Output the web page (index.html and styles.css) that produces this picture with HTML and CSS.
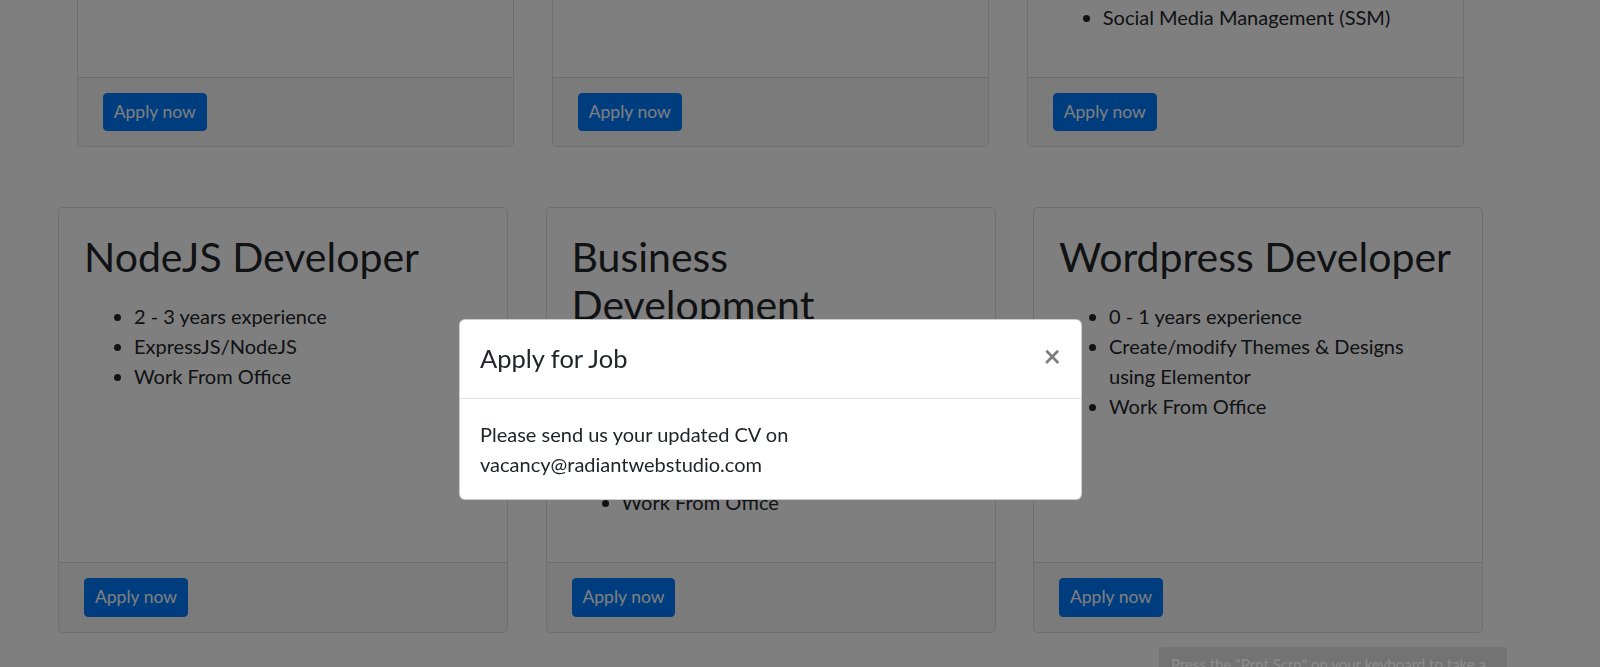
FILE: index.html
```html
<!DOCTYPE html>
<html lang="en">
<head>
<meta charset="utf-8">
<title>Careers</title>
<link rel="stylesheet" href="styles.css">
</head>
<body>
<div class="page">
  <section class="container jobs-top">
    <div class="grid3">
      <div class="card">
        <div class="card-body">
          <h2 class="card-title">PHP Developer</h2>
          <ul>
            <li>1 - 2 years experience</li>
            <li>Laravel/CodeIgniter</li>
          </ul>
        </div>
        <div class="card-footer"><button class="btn">Apply now</button></div>
      </div>
      <div class="card">
        <div class="card-body">
          <h2 class="card-title">UI/UX Designer</h2>
          <ul>
            <li>1 - 2 years experience</li>
            <li>Figma/Adobe XD</li>
          </ul>
        </div>
        <div class="card-footer"><button class="btn">Apply now</button></div>
      </div>
      <div class="card">
        <div class="card-body">
          <h2 class="card-title">Digital Marketing</h2>
          <ul>
            <li>1 - 2 years experience</li>
            <li>Search Engine Optimization</li>
            <li>Social Media Management (SSM)</li>
          </ul>
        </div>
        <div class="card-footer"><button class="btn">Apply now</button></div>
      </div>
    </div>
  </section>

  <section class="container jobs-bottom">
    <div class="deck">
      <div class="card">
        <div class="card-body">
          <h2 class="card-title">NodeJS Developer</h2>
          <ul>
            <li>2 - 3 years experience</li>
            <li>ExpressJS/NodeJS</li>
            <li>Work From Office</li>
          </ul>
        </div>
        <div class="card-footer"><button class="btn">Apply now</button></div>
      </div>
      <div class="card">
        <div class="card-body">
          <h2 class="card-title">Business Development Executive</h2>
          <ul>
            <li>1 - 2 years experience</li>
            <li>Lead Generation</li>
            <li>Client Communication</li>
            <li>Work From Office</li>
          </ul>
        </div>
        <div class="card-footer"><button class="btn">Apply now</button></div>
      </div>
      <div class="card">
        <div class="card-body">
          <h2 class="card-title">Wordpress Developer</h2>
          <ul>
            <li>0 - 1 years experience</li>
            <li>Create/modify Themes &amp; Designs using&nbsp;Elementor</li>
            <li>Work From Office</li>
          </ul>
        </div>
        <div class="card-footer"><button class="btn">Apply now</button></div>
      </div>
    </div>
  </section>
</div>

<div class="backdrop"></div>

<div class="modal">
  <div class="modal-dialog">
    <div class="modal-content">
      <div class="modal-header">
        <h5 class="modal-title">Apply for Job</h5>
        <button class="close" type="button" aria-label="Close">&times;</button>
      </div>
      <div class="modal-body">
        Please send us your updated CV on<br>vacancy@radiantwebstudio.com
      </div>
    </div>
  </div>
</div>

<div class="toast">Press the "Prnt Scrn" on your keyboard to take a screenshot</div>
</body>
</html>
```

FILE: styles.css
```css
html, body {
  margin: 0;
  padding: 0;
}

body {
  font-family: Lato, "Open Sans", "Noto Sans", sans-serif;
  font-size: 20px;
  line-height: 1.5;
  color: #212529;
  background: #fff;
  overflow: hidden;
  height: 667px;
}

.page {
  width: 1541px;
  margin-top: -152px;
}

.container {
  width: 1425px;
  margin: 0 auto;
}

.grid3 {
  display: grid;
  grid-template-columns: repeat(3, 1fr);
  gap: 37.5px;
  padding: 0 18.75px;
}

.jobs-bottom {
  margin-top: 60px;
}

.deck {
  display: flex;
  gap: 37.5px;
  align-items: stretch;
}

.deck .card {
  flex: 1 1 0;
  min-width: 0;
}

.card {
  display: flex;
  flex-direction: column;
  background: #fff;
  border: 1px solid rgba(0, 0, 0, 0.125);
  border-radius: 5px;
}

.card-body {
  flex: 1 1 auto;
  padding: 25px;
}

.card-title {
  margin: 0 0 20px;
  font-size: 41px;
  font-weight: 400;
  line-height: 48px;
}

.card-body ul {
  margin: 0 0 20px;
  padding-left: 50px;
}

.card-footer {
  padding: 15px 25px;
  background: rgba(0, 0, 0, 0.03);
  border-top: 1px solid rgba(0, 0, 0, 0.125);
  border-radius: 0 0 4px 4px;
}

.btn {
  display: inline-block;
  font-family: inherit;
  font-size: 17.5px;
  line-height: 26.25px;
  padding: 5px 10px;
  color: #fff;
  background: #007bff;
  border: 1px solid #007bff;
  border-radius: 4px;
  cursor: pointer;
}

.backdrop {
  position: fixed;
  inset: 0;
  background: rgba(0, 0, 0, 0.5);
  z-index: 10;
}

.modal {
  position: fixed;
  top: 0;
  left: 0;
  width: 1541px;
  padding-top: 319px;
  z-index: 20;
}

.modal-dialog {
  width: 623px;
  margin: 0 auto;
}

.modal-content {
  background: #fff;
  border: 1px solid rgba(0, 0, 0, 0.2);
  border-radius: 6px;
  overflow: hidden;
}

.modal-header {
  display: flex;
  align-items: flex-start;
  padding: 20px;
  border-bottom: 1px solid #dee2e6;
}

.modal-title {
  margin: 0;
  font-size: 25.5px;
  font-weight: 400;
  line-height: 37.5px;
}

.close {
  margin: -20px -20px -20px auto;
  padding: 20px;
  background: transparent;
  border: 0;
  font-family: inherit;
  font-size: 30px;
  font-weight: 700;
  line-height: 1;
  color: #000;
  opacity: 0.5;
  cursor: pointer;
}

.modal-body {
  padding: 20px;
}

.toast {
  position: fixed;
  left: 1159px;
  top: 647px;
  width: 324px;
  padding: 6px 12px;
  background: #737373;
  color: #8d8d8d;
  font-size: 15px;
  line-height: 1.5;
  border-radius: 4px;
  z-index: 30;
}
```
